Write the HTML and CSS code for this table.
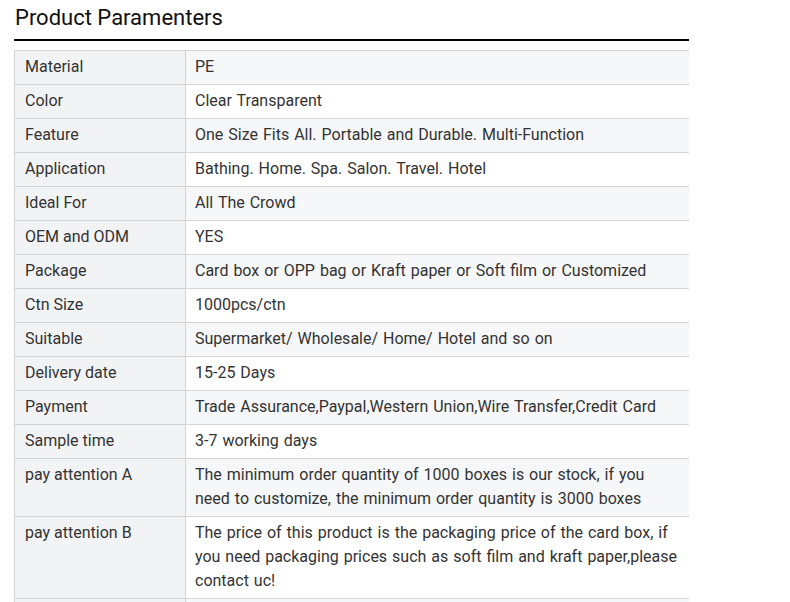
FILE: index.html
```html
<!DOCTYPE html>
<html>
<head>
<meta charset="utf-8">
<link rel="stylesheet" href="styles.css">
</head>
<body>
<div class="section">
  <h2 class="title">Product Paramenters</h2>
  <table class="params">
    <tbody>
      <tr><td class="key">Material</td><td class="val">PE</td></tr>
      <tr><td class="key">Color</td><td class="val">Clear Transparent</td></tr>
      <tr><td class="key">Feature</td><td class="val">One Size Fits All. Portable and Durable. Multi-Function</td></tr>
      <tr><td class="key">Application</td><td class="val">Bathing. Home. Spa. Salon. Travel. Hotel</td></tr>
      <tr><td class="key">Ideal For</td><td class="val">All The Crowd</td></tr>
      <tr><td class="key">OEM and ODM</td><td class="val">YES</td></tr>
      <tr><td class="key">Package</td><td class="val">Card box or OPP bag or Kraft paper or Soft film or Customized</td></tr>
      <tr><td class="key">Ctn Size</td><td class="val">1000pcs/ctn</td></tr>
      <tr><td class="key">Suitable</td><td class="val">Supermarket/ Wholesale/ Home/ Hotel and so on</td></tr>
      <tr><td class="key">Delivery date</td><td class="val">15-25 Days</td></tr>
      <tr><td class="key">Payment</td><td class="val">Trade Assurance,Paypal,Western Union,Wire Transfer,Credit Card</td></tr>
      <tr><td class="key">Sample time</td><td class="val">3-7 working days</td></tr>
      <tr><td class="key">pay attention A</td><td class="val">The minimum order quantity of 1000 boxes is our stock, if you need to customize, the minimum order quantity is 3000 boxes</td></tr>
      <tr><td class="key">pay attention B</td><td class="val">The price of this product is the packaging price of the card box, if you need packaging prices such as soft film and kraft paper,please contact uc!</td></tr>
      <tr><td class="key">&nbsp;</td><td class="val">&nbsp;</td></tr>
    </tbody>
  </table>
</div>
</body>
</html>
```
FILE: styles.css
```css
html, body {
  margin: 0;
  padding: 0;
  background: #fff;
}
body {
  font-family: Roboto, "Liberation Sans", Arial, sans-serif;
  color: #333;
}
.section {
  width: 675px;
  margin-left: 14px;
}
.title {
  margin: 0;
  padding: 4px 0 0 1px;
  font-size: 22px;
  font-weight: 400;
  line-height: 28px;
  color: #111;
  border-bottom: 2px solid #000;
  box-sizing: border-box;
  height: 41px;
}
.params {
  margin-top: 9px;
  width: 675px;
  border-collapse: collapse;
  table-layout: fixed;
  font-size: 16px;
  line-height: 24px;
}
.params td {
  border-top: 1px solid #d4d4d4;
  border-bottom: 1px solid #d4d4d4;
  padding: 4px 10px 5px 10px;
  vertical-align: top;
}
.params .key {
  width: 150px;
  background: #f2f3f5;
  border-left: 1px solid #d4d4d4;
  border-right: 1px solid #d4d4d4;
}
.params .val {
  padding-left: 9px;
  word-spacing: 1px;
}
.params tr:nth-child(odd) .val {
  background: #f6f7f8;
}
.params tr:nth-child(even) .val {
  background: #fff;
}
```
